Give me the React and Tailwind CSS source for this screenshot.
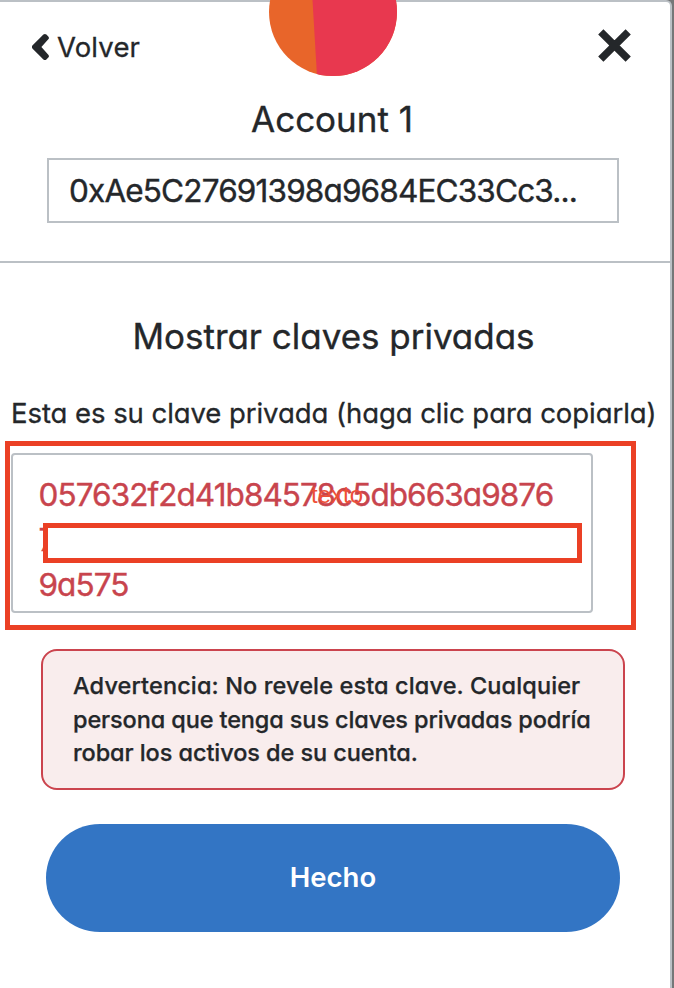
import React from "react";

function Avatar() {
  return (
    <svg className="absolute left-[269px] top-0" width="128" height="76" viewBox="0 0 128 76">
      <defs>
        <clipPath id="avatar-circle">
          <circle cx="64" cy="12" r="64" />
        </clipPath>
      </defs>
      <g clipPath="url(#avatar-circle)">
        <rect width="128" height="76" fill="#e8652a" />
        <path d="M43.5 0H128V76H48Z" fill="#e8384f" />
      </g>
    </svg>
  );
}

function Header() {
  return (
    <header className="box-content h-[261px] border-b-2 border-[#bbc0c5]">
      <div className="flex h-[88px] items-start justify-between pl-[32px] pr-[39px]">
        <button className="flex items-center pt-[28px]">
          <svg width="18" height="28" viewBox="0 0 18 28">
            <path d="M0.4 12.6L11.4 1.6Q12.9 0.2 14.4 1.6L16.3 3.4Q17.6 4.9 16.3 6.3L9.4 14L16.3 21.7Q17.6 23.1 16.3 24.6L14.4 26.4Q12.9 27.8 11.4 26.4L0.4 15.4Q-0.8 14 0.4 12.6Z" fill="#24272a" />
          </svg>
          <span className="ml-[7px] text-[27.5px] leading-[38px] tracking-[0.15px] [-webkit-text-stroke:0.3px]">Volver</span>
        </button>
        <button className="mt-[29px]">
          <svg width="33" height="33" viewBox="0 0 33 33">
            <path d="M2.8 2.8L30.2 30.2M30.2 2.8L2.8 30.2" stroke="#24272a" strokeWidth="7.4" />
          </svg>
        </button>
      </div>
      <h1 className="flex h-[62px] items-center justify-center pr-[6px] text-[35px] [-webkit-text-stroke:0.35px]">Account 1</h1>
      <div className="ml-[47px] mt-[8px] flex h-[65px] w-[572px] items-center whitespace-nowrap border-2 border-[#bbc0c5] pl-[20px] pt-[1px] text-[31.5px] tracking-[-0.84px] [-webkit-text-stroke:0.4px]">
        0xAe5C27691398a9684EC33Cc3...
      </div>
    </header>
  );
}

export default function App() {
  return (
    <div className="h-[988px] w-[674px] overflow-hidden bg-[#757778]">
      <div className="relative h-[988px] w-[672px] rounded-tr-[6px] border-r-2 border-t-2 border-[#bbc0c5] bg-white font-['Inter','Open_Sans',sans-serif] text-[#24272a] [font-feature-settings:'cv11']">
        <div className="-mt-[2px]">
          <Header />
        </div>
        <div className="absolute left-0 -top-[2px]">
          <Avatar />
        </div>

        <h2 className="mt-[48px] flex h-[50px] items-center justify-center pr-[3px] text-[35px] tracking-[-0.02px] [-webkit-text-stroke:0.35px]">Mostrar claves privadas</h2>
        <p className="ml-[11px] mt-[32px] h-[40px] whitespace-nowrap text-[27.5px] leading-[40px] tracking-[-0.06px] [-webkit-text-stroke:0.3px]">
          Esta es su clave privada (haga clic para copiarla)
        </p>

        <div className="relative ml-[11px] mt-[20px] h-[160px] w-[582px] rounded-[4px] border-2 border-[#bbc0c5] pl-[25.5px] pt-[17px] text-[31.5px] leading-[45px] tracking-[-0.93px] text-[#c8444d] [-webkit-text-stroke:0.4px]">
          <div>057632f2d41b84578c5db663a9876</div>
          <div>7</div>
          <div>9a575</div>
          <span className="absolute left-[298px] top-[27px] font-['Liberation_Sans',sans-serif] text-[24px] leading-[26px] tracking-normal text-[#ee4f36] [-webkit-text-stroke:0px]">texto</span>
          <div className="absolute left-[30px] top-[68px] h-[40px] w-[539px] border-[5px] border-[#eb4025] bg-white" />
          <div className="absolute -left-[8.5px] -top-[14.5px] h-[189px] w-[631px] border-[5px] border-[#eb4025]" />
        </div>

        <div className="ml-[41px] mt-[36px] h-[141px] w-[584px] whitespace-nowrap rounded-[16px] border-2 border-[#cb444e] bg-[#f9eded] pl-[30px] pt-[18px] text-[23.5px] font-medium leading-[33.5px] [-webkit-text-stroke:0.25px]">
          <div className="tracking-[0.12px]">Advertencia: No revele esta clave. Cualquier</div>
          <div className="tracking-[-0.12px]">persona que tenga sus claves privadas podría</div>
          <div className="tracking-[-0.08px]">robar los activos de su cuenta.</div>
        </div>

        <button className="ml-[46px] mt-[34px] flex h-[108px] w-[574px] items-center justify-center rounded-full bg-[#3375c4] text-[27.5px] font-semibold text-white">
          Hecho
        </button>
      </div>
    </div>
  );
}
